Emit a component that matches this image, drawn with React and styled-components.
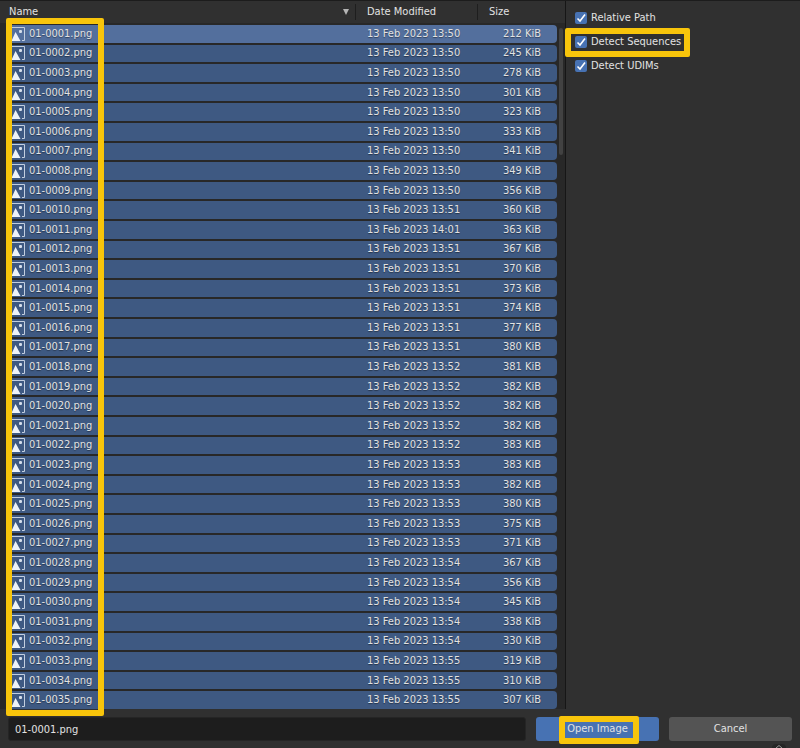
import React, { useState } from 'react';
import styled, { createGlobalStyle } from 'styled-components';

const GlobalStyle = createGlobalStyle`
  * {
    box-sizing: border-box;
  }

  body {
    margin: 0;
    background: #303030;
    color: #e2e2e2;
    font: 11px/16px 'DejaVu Sans Condensed', 'DejaVu Sans', sans-serif;
  }
`;

const Page = styled.div`
  display: flex;
  flex-direction: column;
  min-height: 100vh;
  border-top: 1px solid #1c1c1c;
  overflow: hidden;
`;

const Browser = styled.main`
  display: flex;
  flex: 1;
`;

const ListPanel = styled.section`
  position: relative;
  display: flex;
  flex: 1;
  background: #282828;
  border-right: 1px solid #161616;
`;

const FileTable = styled.table`
  display: flex;
  flex: 1;
  flex-direction: column;
`;

const TableHead = styled.thead`
  display: block;
  height: 22px;
  margin-bottom: 2px;
  background: #303030;
`;

const TableBody = styled.tbody`
  display: grid;
  flex: 1;
  grid-auto-rows: 1fr;
  gap: 2px;
  padding: 0 8px 0 7px;
`;

const HeadRow = styled.tr`
  display: grid;
  grid-template-columns: 1fr 122px 88px;
  align-items: center;
  height: 22px;
`;

const HeadCell = styled.th`
  display: flex;
  align-items: center;
  justify-content: space-between;
  padding: 0 4px 0 ${props => (props.$first ? '9px' : '11px')};
  border-left: ${props => (props.$first ? 'none' : '1px solid #1e1e1e')};
  font-weight: normal;
`;

const FileRow = styled.tr`
  display: grid;
  grid-template-columns: 1fr 122px 80px;
  align-items: center;
  border-radius: 4px;
  background: ${props => (props.$active ? '#536f9d' : '#3e5982')};
`;

const Cell = styled.td`
  display: flex;
  align-items: center;
  gap: 4px;
  padding: 0 0 0 ${props => (props.$name ? '4px' : '12px')};
  text-shadow: 0 1px 1px rgba(0, 0, 0, 0.4);
`;

const SizeCell = styled(Cell)`
  justify-content: flex-end;
  padding-right: 16px;
`;

const ScrollThumb = styled.div`
  position: absolute;
  top: 27px;
  right: 2px;
  width: 4px;
  height: 18%;
  border-radius: 2px;
  background: #424242;
`;

const Highlight = styled.div`
  position: absolute;
  border: 6px solid #f8c50b;
  border-radius: 2px;
  pointer-events: none;
`;

const NameHighlight = styled(Highlight)`
  top: 17px;
  bottom: -7px;
  left: 6px;
  width: 98px;
  z-index: 1;
`;

const OptionHighlight = styled(Highlight)`
  inset: -4px -9px -5px -10px;
`;

const ButtonHighlight = styled(Highlight)`
  inset: -1px 20px -3px 23px;
`;

const Options = styled.aside`
  display: flex;
  flex-direction: column;
  align-items: flex-start;
  gap: 4px;
  width: 234px;
  padding: 7px 9px;
`;

const Option = styled.label`
  position: relative;
  display: flex;
  align-items: center;
  gap: 4px;
  height: 20px;
`;

const CheckWrap = styled.span`
  position: relative;
  display: flex;
`;

const CheckInput = styled.input`
  appearance: none;
  width: 12px;
  height: 12px;
  margin: 0;
  border-radius: 2px;
  background: #545454;

  &:checked {
    background: #4772b3;
  }

  &:not(:checked) + svg {
    display: none;
  }
`;

const CheckMark = styled.svg`
  position: absolute;
  inset: 0;
  pointer-events: none;
`;

const Footer = styled.footer`
  position: relative;
  display: flex;
  gap: 10px;
  padding: 8px 8px 7px;
`;

const FileInput = styled.input`
  flex: 1;
  min-width: 0;
  height: 24px;
  padding: 0 6px;
  border: 1px solid #252525;
  border-radius: 3px;
  background: #1d1d1d;
  color: inherit;
  font: inherit;
`;

const Button = styled.button`
  position: relative;
  width: 123px;
  height: 24px;
  padding: 0;
  border: 0;
  border-radius: 3px;
  background: ${props => (props.$primary ? '#4772b3' : '#545454')};
  color: inherit;
  font: inherit;
`;

const RegionToggle = styled.svg`
  position: absolute;
  right: 14px;
  bottom: 0;
`;

const files = [
  ['13:50', 212], ['13:50', 245], ['13:50', 278], ['13:50', 301], ['13:50', 323],
  ['13:50', 333], ['13:50', 341], ['13:50', 349], ['13:50', 356], ['13:51', 360],
  ['14:01', 363], ['13:51', 367], ['13:51', 370], ['13:51', 373], ['13:51', 374],
  ['13:51', 377], ['13:51', 380], ['13:52', 381], ['13:52', 382], ['13:52', 382],
  ['13:52', 382], ['13:52', 383], ['13:53', 383], ['13:53', 382], ['13:53', 380],
  ['13:53', 375], ['13:53', 371], ['13:54', 367], ['13:54', 356], ['13:54', 345],
  ['13:54', 338], ['13:54', 330], ['13:55', 319], ['13:55', 310], ['13:55', 307],
].map(([time, size], i) => ({
  name: `01-00${String(i + 1).padStart(2, '0')}.png`,
  date: `13 Feb 2023 ${time}`,
  size: `${size} KiB`,
}));

const ImageIcon = () => (
  <svg width="14" height="14" viewBox="0 0 14 14" aria-hidden="true">
    <path d="M.5.5h13v13H11M.5.5v13" fill="none" stroke="#c3cfe0" />
    <path d="M.5 14 4.5 5l5 9z" fill="#edf2f8" />
    <rect x="8" y="3" width="3" height="3" rx="1" fill="#d5deeb" />
  </svg>
);

const CheckOption = ({ label, highlighted }) => {
  const [checked, setChecked] = useState(true);

  return (
    <Option>
      <CheckWrap>
        <CheckInput
          type="checkbox"
          checked={checked}
          onChange={e => setChecked(e.target.checked)}
        />
        <CheckMark width="12" height="12" viewBox="0 0 12 12">
          <path d="M2.5 6.5 5 9l5-6.5" fill="none" stroke="#fff" strokeWidth="1.6" />
        </CheckMark>
      </CheckWrap>
      {label}
      {highlighted && <OptionHighlight />}
    </Option>
  );
};

const App = () => {
  const [fileName, setFileName] = useState('01-0001.png');

  return (
    <Page>
      <GlobalStyle />
      <Browser>
        <ListPanel>
          <FileTable>
            <TableHead>
              <HeadRow>
                <HeadCell $first>
                  Name
                  <svg width="10" height="8" viewBox="0 0 10 8" aria-hidden="true">
                    <path d="M2 1h6L5 7z" fill="#b5b5b5" />
                  </svg>
                </HeadCell>
                <HeadCell>Date Modified</HeadCell>
                <HeadCell>Size</HeadCell>
              </HeadRow>
            </TableHead>
            <TableBody>
              {files.map((file, i) => (
                <FileRow key={file.name} $active={i === 0}>
                  <Cell $name>
                    <ImageIcon />
                    {file.name}
                  </Cell>
                  <Cell>{file.date}</Cell>
                  <SizeCell>{file.size}</SizeCell>
                </FileRow>
              ))}
            </TableBody>
          </FileTable>
          <ScrollThumb />
          <NameHighlight />
        </ListPanel>
        <Options>
          <CheckOption label="Relative Path" />
          <CheckOption label="Detect Sequences" highlighted />
          <CheckOption label="Detect UDIMs" />
        </Options>
      </Browser>
      <Footer>
        <FileInput
          aria-label="File name"
          value={fileName}
          onChange={e => setFileName(e.target.value)}
        />
        <Button type="button" $primary>
          Open Image
          <ButtonHighlight />
        </Button>
        <Button type="button">Cancel</Button>
        <RegionToggle width="14" height="4" viewBox="0 0 14 4" aria-hidden="true">
          <path d="M0 4a4 4 0 0 1 4-4h6a4 4 0 0 1 4 4z" fill="#262626" />
          <path d="M4 4l3-2.5L10 4" fill="none" stroke="#999" />
        </RegionToggle>
      </Footer>
    </Page>
  );
};

export default App;
